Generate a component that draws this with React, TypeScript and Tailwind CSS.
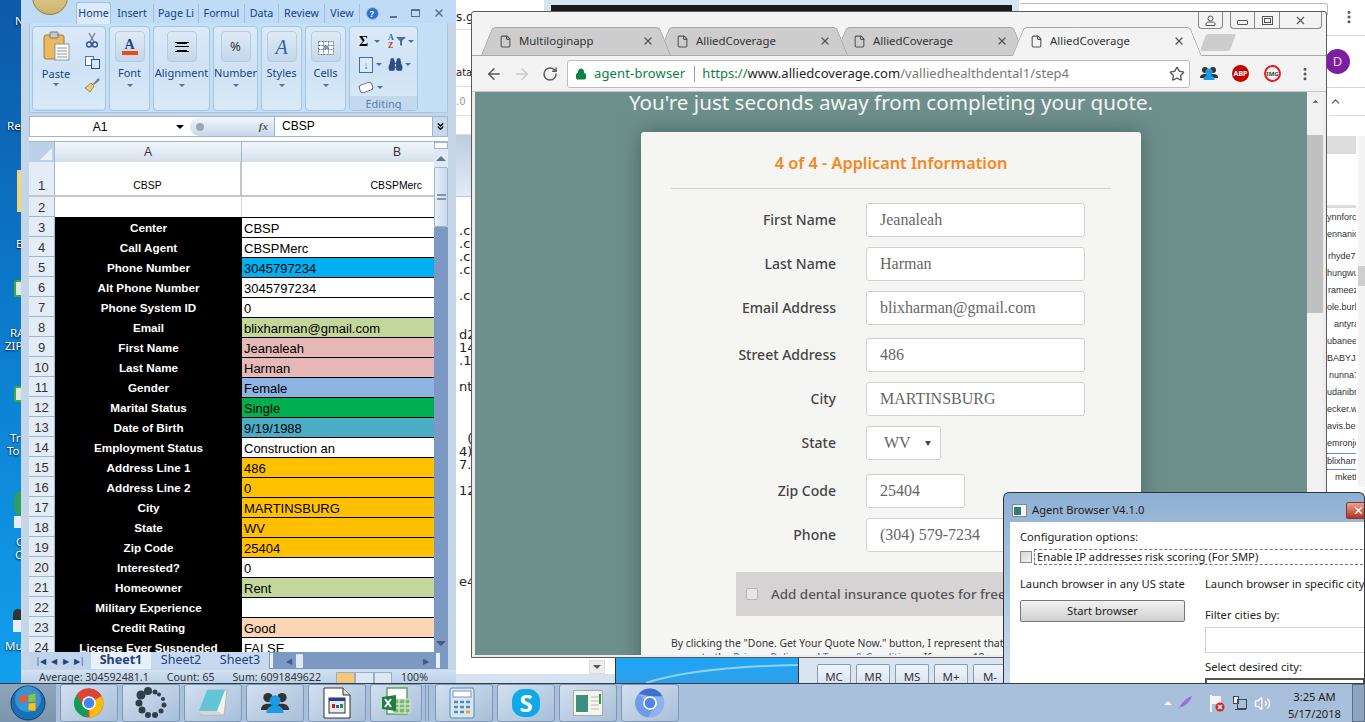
import type { ReactNode } from "react";
import { ArrowLeft, ArrowRight, Binoculars, ChevronUp, ChevronsDown, File, Lock, MoreVertical, RotateCw, Star, Volume2, X } from "lucide-react";

const rows: [string, string, string][] = [
  ["Center", "CBSP", "bg-white"],
  ["Call Agent", "CBSPMerc", "bg-white"],
  ["Phone Number", "3045797234", "bg-[#00b0f0]"],
  ["Alt Phone Number", "3045797234", "bg-white"],
  ["Phone System ID", "0", "bg-white"],
  ["Email", "blixharman@gmail.com", "bg-[#c4d79b]"],
  ["First Name", "Jeanaleah", "bg-[#e6b8b7]"],
  ["Last Name", "Harman", "bg-[#e6b8b7]"],
  ["Gender", "Female", "bg-[#8db4e2]"],
  ["Marital Status", "Single", "bg-[#00b050]"],
  ["Date of Birth", "9/19/1988", "bg-[#4bacc6]"],
  ["Employment Status", "Construction an", "bg-white"],
  ["Address Line 1", "486", "bg-[#ffc000]"],
  ["Address Line 2", "0", "bg-[#ffc000]"],
  ["City", "MARTINSBURG", "bg-[#ffc000]"],
  ["State", "WV", "bg-[#ffc000]"],
  ["Zip Code", "25404", "bg-[#ffc000]"],
  ["Interested?", "0", "bg-white"],
  ["Homeowner", "Rent", "bg-[#c4d79b]"],
  ["Military Experience", "", "bg-white"],
  ["Credit Rating", "Good", "bg-[#fcd5b4]"],
  ["License Ever Suspended", "FALSE", "bg-white"],
];

const fields = [
  { label: "First Name", value: "Jeanaleah", mt: "mt-[14px]" },
  { label: "Last Name", value: "Harman", mt: "mt-[10px]" },
  { label: "Email Address", value: "blixharman@gmail.com", mt: "mt-[10px]" },
  { label: "Street Address", value: "486", mt: "mt-[13px]" },
  { label: "City", value: "MARTINSBURG", mt: "mt-[10px]" },
];

const sideNames: [string, string][] = [
  ["ynnforc", "pl-0"],
  ["ennanic", "pl-0"],
  ["rhyde7z", "pl-[1px] mt-[5px]"],
  ["hungwu", "pl-0"],
  ["rameez", "pl-[1px]"],
  ["ole.burl", "pl-0"],
  ["antyra", "pl-[7px]"],
  ["ubanee", "pl-0"],
  ["BABYJA", "pl-0"],
  ["nunna7", "pl-[2px]"],
  ["udanibr", "pl-0"],
  ["ecker.w", "pl-0"],
  ["avis.ben", "pl-0"],
  ["emronjo", "pl-0"],
  ["blixham", "pl-0 border-y border-[#5b8fe0]"],
  ["mkett", "pl-[8px]"],
];

const behindLines = [
  [".c", "mt-[27px]"], [".c", ""], [".c", ""], [".c", ""], ["", ""], [".c", ""], ["", ""], ["", ""],
  ["d2", ""], ["14", ""], [".1", ""], ["", ""], ["nt", ""], ["", ""], ["", ""], ["", ""], ["  (", ""], ["4)", ""], ["7.", ""], ["", ""], ["12", ""],
];

const excelTabs: [string, string][] = [
  ["Insert", "w-[43px]"],
  ["Page Li", "w-[45px]"],
  ["Formul", "w-[46px]"],
  ["Data", "w-[34px]"],
  ["Review", "w-[46px]"],
  ["View", "w-[35px]"],
];

function Caret() {
  return <span className="h-0 w-0 border-x-[3px] border-t-[3px] border-x-transparent border-t-[#4d6f99]" />;
}

function Ribbon({ label, children, w, launcher }: { label: string; children?: ReactNode; w: string; launcher?: boolean }) {
  return (
    <div className={`${w} flex shrink-0 flex-col overflow-hidden rounded-[4px] border border-[#a9c4e0] bg-gradient-to-b from-[#dbeaf8] via-[#cfe3f5] to-[#d8eaf8]`}>
      <div className="flex flex-1 flex-col items-center pt-[4px]">{children}</div>
      {launcher ? <div className="h-[16px] bg-[#c2d9ee] text-center text-[11px] leading-[16px] text-[#5b7fa8]">{label}</div> : null}
    </div>
  );
}

function RibbonGroup({ label, glyph, w }: { label: string; glyph: ReactNode; w: string }) {
  return (
    <Ribbon label={label} w={w}>
      <div className="flex h-[31px] w-[30px] items-center justify-center rounded-[4px] border border-[#b5cbe2] bg-gradient-to-b from-[#dfeaf6] to-[#c3d7eb]">{glyph}</div>
      <span className="mt-[4px] whitespace-nowrap text-[11px] leading-[14px] text-[#15428b]">{label}</span>
      <span className="mt-[6px]"><Caret /></span>
    </Ribbon>
  );
}

function Sheet() {
  return (
    <div className="flex min-h-0 flex-1 overflow-hidden">
      <div className="w-[405px] shrink-0 overflow-hidden bg-white">
        <div className="flex h-[20px]">
          <div className="flex w-[26px] items-end justify-end border-r border-[#9eb6ce] bg-[#bcd0e8] p-[2px]">
            <span className="h-0 w-0 border-b-[12px] border-l-[12px] border-b-[#e8f0f8] border-l-transparent" />
          </div>
          <div className="flex w-[187px] justify-center border-r border-[#9eb6ce] bg-gradient-to-b from-[#f2f6fb] to-[#d5e0ed] text-[12px] leading-[21px] text-[#333]">A</div>
          <div className="flex w-[192px] justify-end bg-gradient-to-b from-[#f2f6fb] to-[#d5e0ed] pr-[33px] text-[12px] leading-[21px] text-[#333]">B</div>
        </div>
        <div className="flex h-[35px] border-b-2 border-[#c6c6c6]">
          <div className="flex w-[26px] items-end justify-center border-r border-[#9eb6ce] bg-[#e4ecf7] text-[13px] leading-[18px] text-[#333]">1</div>
          <div className="flex w-[187px] items-end justify-center border-r-2 border-[#c6c6c6] pb-[3px] text-[10.4px] leading-[12px] text-black">CBSP</div>
          <div className="flex w-[192px] items-end justify-end pb-[3px] pr-[12px] text-[10.4px] leading-[12px] text-black">CBSPMerc</div>
        </div>
        <div className="flex h-[20px]">
          <div className="w-[26px] border-b border-r border-[#9eb6ce] bg-[#e4ecf7] text-center text-[13px] leading-[21px] text-[#333]">2</div>
          <div className="w-[187px] border-r border-[#d4d4d4]" />
          <div className="w-[192px]" />
        </div>
        {rows.map((r, i) => (
          <div className={`flex overflow-hidden ${i === rows.length - 1 ? "h-[16px]" : "h-[20px]"}`} key={r[0]}>
            <div className="w-[26px] border-b border-r border-[#9eb6ce] bg-[#e4ecf7] text-center text-[13px] leading-[22px] text-[#333]">{i + 3}</div>
            <div className="w-[187px] whitespace-nowrap bg-black text-center text-[11.7px] font-bold leading-[22px] text-white">{r[0]}</div>
            <div className={`${r[2]} w-[192px] overflow-hidden whitespace-nowrap border-t border-black pl-[2px] text-[13px] leading-[21px] text-black`}>{r[1]}</div>
          </div>
        ))}
      </div>
      <div className="flex w-[15px] flex-col bg-[#dfe9f5]">
        <div className="h-[7px] border border-[#9eb6ce] bg-white" />
        <div className="flex h-[18px] items-center justify-center">
          <span className="h-0 w-0 border-x-[5px] border-b-[5px] border-x-transparent border-b-[#5f7690]" />
        </div>
        <div className="flex h-[60px] items-center justify-center rounded-[2px] border border-[#9eb6ce] bg-gradient-to-r from-[#e8eff7] to-[#c9d9eb]">
          <div className="h-[6px] w-[9px] border-y-2 border-[#8094ab]" />
        </div>
        <div className="flex-1 bg-[#7c99c3]" />
        <div className="flex h-[18px] items-center justify-center bg-[#7c99c3]">
          <span className="h-0 w-0 border-x-[5px] border-t-[5px] border-x-transparent border-t-[#46596f]" />
        </div>
      </div>
    </div>
  );
}

function ExcelWindow() {
  return (
    <div className="absolute left-[21px] top-0 flex h-[683px] w-[435px] flex-col overflow-hidden bg-[#c5d6e9] font-['Liberation_Sans',sans-serif]">
      <div className="relative flex h-[23px] shrink-0 items-end bg-[#bfdbf5] pl-[55px] font-['Noto_Sans',sans-serif] text-[10.7px] text-[#15428b]">
        <span className="absolute left-[11px] top-[-21px] h-[36px] w-[36px] rounded-full border border-[#8f7a45] bg-gradient-to-b from-[#e8d9a8] to-[#cdb36a]" />
        <div className="mb-[-1px] flex h-[22px] w-[35px] items-center justify-center rounded-t-[3px] border border-b-0 border-[#9fc0e0] bg-[#dcebf9]">Home</div>
        {excelTabs.map(([t, w]) => (
          <div key={t} className={`${w} flex h-[19px] items-center justify-center overflow-hidden whitespace-nowrap border-r border-[#a3c0dc]`}>{t}</div>
        ))}
        <div className="ml-[5px] flex h-[19px] w-[14px] items-center justify-center">
          <span className="flex h-[13px] w-[13px] items-center justify-center rounded-full border border-[#9fc0e8] bg-[#2f6fd0] text-[9px] font-bold leading-none text-white">?</span>
        </div>
        <span className="mb-[5px] ml-[11px] h-[2px] w-[7px] bg-[#58708c]" />
        <span className="mb-[6px] ml-[14px] h-[8px] w-[9px] border border-t-2 border-[#58708c]" />
        <X className="mb-[4px] ml-[13px] text-[#58708c]" size={12} strokeWidth={3} />
      </div>
      <div className="mx-[8px] flex h-[90px] shrink-0 gap-[3px] rounded-[2px] border-x border-b border-[#a9c4e0] bg-[#c4e0f7] px-[2px] pb-[1px] pt-[3px] font-['Noto_Sans',sans-serif]">
        <Ribbon label="Clipboard" w="w-[74px]" launcher>
          <div className="flex w-full">
            <div className="flex w-[46px] flex-col items-center">
              <svg width="28" height="30" viewBox="0 0 28 30"><rect x="2" y="4" width="20" height="24" rx="2" fill="#e9b960" stroke="#9c7b3f" /><rect x="8" y="1" width="8" height="6" rx="1" fill="#c6c9d0" stroke="#73787f" /><rect x="13" y="13" width="14" height="16" fill="#fff" stroke="#8c95a3" /><path d="M15 17h10M15 20h10M15 23h10M15 26h10" stroke="#8c95a3" /></svg>
              <span className="mt-[6px] text-[11px] leading-[14px] text-[#15428b]">Paste</span>
              <span className="mt-[4px]"><Caret /></span>
            </div>
            <div className="flex w-[26px] flex-col items-center gap-[8px] pt-[2px]">
              <svg width="12" height="15" viewBox="0 0 12 15"><path d="M3 0l5 9M9 0L4 9" stroke="#7a8594" strokeWidth="1.4" /><circle cx="3" cy="11.5" r="2.5" fill="none" stroke="#2f4f9f" strokeWidth="1.5" /><circle cx="9" cy="11.5" r="2.5" fill="none" stroke="#2f4f9f" strokeWidth="1.5" /></svg>
              <svg width="15" height="13" viewBox="0 0 15 13"><rect x=".5" y=".5" width="8" height="9" fill="#fff" stroke="#4f6fa8" /><rect x="6.5" y="3.5" width="8" height="9" fill="#dbe7f7" stroke="#1f4f9f" /></svg>
              <svg width="16" height="16" viewBox="0 0 16 16"><path d="M9 7l5-6 2 2-6 5z" fill="#6d7fa0" /><path d="M1 11l6-5 3 3-4 6z" fill="#e8cd78" stroke="#a08a42" /></svg>
            </div>
          </div>
        </Ribbon>
        <RibbonGroup label="Font" w="w-[41px]" glyph={<span className="flex flex-col items-center font-['Liberation_Serif',serif] text-[14px] font-bold leading-[13px] text-[#1f3f8f]">A<span className="h-[4px] w-[16px] bg-[#f04a10]" /></span>} />
        <RibbonGroup label="Alignment" w="w-[57px]" glyph={<span className="flex h-[10px] w-[14px] flex-col justify-between border-y border-black"><span className="mx-auto h-px w-[10px] bg-black" /><span className="h-px w-full bg-black" /><span className="mx-auto h-px w-[10px] bg-black" /></span>} />
        <RibbonGroup label="Number" w="w-[45px]" glyph={<span className="text-[13px] leading-none text-[#333]">%</span>} />
        <RibbonGroup label="Styles" w="w-[41px]" glyph={<span className="font-['Liberation_Serif',serif] text-[20px] italic leading-none text-[#2f5fb0]">A</span>} />
        <RibbonGroup label="Cells" w="w-[41px]" glyph={<svg width="16" height="16" viewBox="0 0 16 16"><path d="M.5 2.5h15v13H.5zM.5 6.5h15M.5 10.5h15M5.5 2.5v13M10.5 2.5v13" fill="#fff" stroke="#6b7a8f" strokeDasharray="2 1" /><rect x="6" y="7" width="4" height="3" fill="#6f9de0" /></svg>} />
        <Ribbon label="Editing" w="w-[69px]" launcher>
          <div className="grid w-full grid-cols-2 gap-y-[6px] pl-[9px] pt-[2px]">
            <span className="flex h-[17px] items-center gap-[6px] font-['Liberation_Serif',serif] text-[14px] font-bold"><span>Σ</span><Caret /></span>
            <span className="flex h-[17px] items-center gap-[2px]">
              <span className="flex flex-col font-['Liberation_Serif',serif] text-[8px] font-bold leading-[8px] text-[#2f5fb0]">A<span className="text-[#c03030]">Z</span></span>
              <svg width="10" height="9" viewBox="0 0 10 9"><path d="M0 0h10L6 4v5L4 8V4z" fill="#4c6f9f" /></svg>
              <Caret />
            </span>
            <span className="flex h-[17px] items-center gap-[3px]"><span className="h-[16px] w-[14px] border border-[#3f6fb0] bg-[#dcebf9] text-center text-[10px] font-bold leading-[14px] text-[#2a5fc0]">↓</span><Caret /></span>
            <span className="flex h-[17px] items-center gap-[2px]"><Binoculars size={15} fill="#2f4f80" className="text-[#2f4f80]" /><Caret /></span>
            <span className="flex h-[17px] items-center gap-[4px]"><span className="h-[9px] w-[14px] -rotate-[20deg] rounded-[3px] border border-[#667] bg-white" /><Caret /></span>
          </div>
        </Ribbon>
      </div>
      <div className="mx-[8px] mt-[3px] flex h-[21px] shrink-0 items-center border border-[#9eb6ce] bg-white text-[12px] text-black">
        <div className="relative flex h-full w-[160px] shrink-0 justify-center pr-[20px] leading-[21px]">
          A1
          <span className="absolute right-[6px] top-[8px] h-0 w-0 border-x-[4px] border-t-[4px] border-x-transparent border-t-black" />
        </div>
        <div className="flex h-full w-[84px] shrink-0 items-center justify-between rounded-l-full bg-gradient-to-b from-[#f3f7fc] to-[#c6d7ea] pl-[6px] pr-[6px] font-['Liberation_Serif',serif] text-[11px] font-bold italic text-[#555]">
          <span className="h-[8px] w-[8px] rounded-full bg-[#9aa7b5]" />
          <span>fx</span>
        </div>
        <div className="flex-1 border-l border-[#9eb6ce] pl-[7px] leading-[21px]">CBSP</div>
        <div className="flex h-full w-[15px] items-center justify-center border-l border-[#9eb6ce] bg-[#c7d9ec]"><ChevronsDown size={11} strokeWidth={3} /></div>
      </div>
      <div className="mx-[8px] h-[5px] shrink-0 border-b border-[#9eb6ce] bg-white" />
      <div className="mx-[8px] flex min-h-0 flex-1 flex-col">
        <Sheet />
        <div className="flex h-[17px] shrink-0 items-center bg-[#7c99c3] font-['Noto_Sans',sans-serif] text-[12.5px] text-[#26417e]">
          <div className="flex h-full w-[62px] items-center justify-around bg-[#bfd3ea] px-[4px] text-[8px] text-[#26417e]">
            <span>|◀</span><span>◀</span><span>▶</span><span>▶|</span>
          </div>
          <div className="flex h-full w-[60px] items-center justify-center bg-[#e8f0f9] font-bold">Sheet1</div>
          <div className="flex h-full w-[60px] items-center justify-center bg-[#c6d9f0]">Sheet2</div>
          <div className="flex h-full w-[58px] items-center justify-center bg-[#c6d9f0]">Sheet3</div>
          <div className="h-full w-[5px] border border-[#7c99c3] bg-[#e8f0f9]" />
          <span className="ml-[12px] text-[8px] text-[#3f5a85]">◀</span>
          <span className="ml-[4px] h-[14px] w-[7px] rounded-[1px] bg-[#dfe8f3]" />
          <span className="ml-auto mr-[6px] text-[8px] text-[#3f5a85]">▶</span>
          <div className="mr-[7px] h-full w-[6px] border border-[#7c99c3] bg-[#e8f0f9]" />
        </div>
      </div>
      <div className="mt-[1px] flex h-[13px] shrink-0 items-start gap-[18px] overflow-hidden bg-gradient-to-b from-[#d2e2f3] to-[#bcd0e8] pl-[18px] font-['Noto_Sans',sans-serif] text-[10.6px] leading-[15px] text-[#333]">
        <span>Average: 304592481.1</span>
        <span>Count: 65</span>
        <span>Sum: 6091849622</span>
        <span className="ml-[-3px] mt-[2px] flex">
          <span className="h-[12px] w-[19px] border border-[#98afc9] bg-[#f3c877]" />
          <span className="h-[12px] w-[19px] border border-[#98afc9] bg-[#dfe7f1]" />
          <span className="h-[12px] w-[18px] border border-[#98afc9] bg-[#dfe7f1]" />
        </span>
        <span className="ml-[-9px]">100%</span>
      </div>
    </div>
  );
}

function Tab({ title, active, z }: { title: string; active?: boolean; z: string }) {
  const fill = active ? "bg-[#f3f3f3]" : "bg-[#cdcdcd]";
  return (
    <div className={`${z} ${active ? "mb-[-1px] h-[29px] pb-[1px]" : "h-[28px]"} relative mr-[-13px] flex w-[190px] items-center pl-[18px] pr-[17px] text-[11.4px] text-[#333]`}>
      <span className={`${fill} absolute inset-y-0 left-0 w-[60%] origin-bottom -skew-x-[22deg] rounded-tl-[4px] border-l border-t border-[#a5a5a5]`} />
      <span className={`${fill} absolute inset-y-0 right-0 w-[60%] origin-bottom skew-x-[22deg] rounded-tr-[4px] border-r border-t border-[#a5a5a5]`} />
      <File size={13} className="relative shrink-0 text-[#555]" />
      <span className="relative ml-[7px] whitespace-nowrap">{title}</span>
      <X size={12} strokeWidth={2.5} className="relative ml-auto text-[#555]" />
    </div>
  );
}

function Field({ label, children, className }: { label: string; children: ReactNode; className?: string }) {
  return (
    <div className={`flex h-[34px] items-center ${className ?? ""}`}>
      <label className="mb-[2px] w-[165px] shrink-0 text-right text-[14px] font-medium text-[#444]">{label}</label>
      <div className="ml-[30px]">{children}</div>
    </div>
  );
}

function InputBox({ value, w }: { value: string; w: string }) {
  return (
    <div className={`${w} flex h-[34px] items-center rounded-[3px] border border-[#cfcfcf] bg-white pl-[13px] font-['Liberation_Serif',serif] text-[16px] text-[#666]`}>{value}</div>
  );
}

function ChromeWindow() {
  return (
    <div className="absolute left-[471px] top-[11px] flex h-[647px] w-[856px] flex-col overflow-hidden rounded-t-[3px] border border-[#5b5b5b] bg-[#f3f3f3] font-['Noto_Sans',sans-serif]">
      <div className="relative flex h-[43px] shrink-0 items-end pl-[9px]">
        <Tab title="Multiloginapp" z="z-[4]" />
        <Tab title="AlliedCoverage" z="z-[3]" />
        <Tab title="AlliedCoverage" z="z-[2]" />
        <Tab title="AlliedCoverage" active z="z-10" />
        <div className="mb-[4px] ml-[14px] h-[17px] w-[30px] -skew-x-[20deg] rounded-[2px] bg-[#cdcdcd]" />
        <div className="absolute right-[4px] top-0 z-20 flex h-[17px] text-[#555]">
          <div className="mr-[7px] flex w-[25px] items-center justify-center rounded-b-[4px] border border-t-0 border-[#888]">
            <svg width="11" height="11" viewBox="0 0 11 11" fill="none" stroke="#555"><circle cx="5.5" cy="3.5" r="2.5" /><path d="M1 10.5V9c0-1.5 2-2 4.5-2s4.5.5 4.5 2v1.5z" /></svg>
          </div>
          <div className="flex w-[25px] items-end justify-center rounded-bl-[4px] border border-t-0 border-[#888] pb-[3px]"><span className="h-[5px] w-[11px] rounded-[1px] border border-[#555]" /></div>
          <div className="flex w-[25px] items-center justify-center border-b border-r border-[#888]"><span className="h-[9px] w-[11px] border border-[#555] p-[1px]"><span className="block h-full w-full border border-[#555]" /></span></div>
          <div className="flex w-[42px] items-center justify-center rounded-br-[4px] border-b border-r border-[#888]"><X size={13} strokeWidth={2} /></div>
        </div>
      </div>
      <div className="flex h-[37px] shrink-0 items-center border-y border-[#c3c3c3] border-t-[#a9a9a9] pl-[13px]">
        <ArrowLeft size={18} strokeWidth={2} className="text-[#5a5a5a]" />
        <ArrowRight size={18} strokeWidth={2} className="ml-[10px] text-[#c9c9c9]" />
        <RotateCw size={16} strokeWidth={2.2} className="ml-[11px] text-[#5a5a5a]" />
        <div className="ml-[9px] flex h-[28px] w-[623px] shrink-0 items-center rounded-[3px] border border-[#bdbdbd] bg-white pl-[7px] text-[13px]">
          <Lock size={12} fill="#0b8043" className="shrink-0 text-[#0b8043]" />
          <span className="ml-[7px] tracking-[0.15px] text-[#0b8043]">agent-browser</span>
          <span className="ml-[9px] h-[16px] w-px bg-[#9a9a9a]" />
          <span className="ml-[7px] whitespace-nowrap tracking-[0.05px]"><span className="text-[#0b8043]">https://</span><span className="text-[#222]">www.alliedcoverage.com</span><span className="text-[#777]">/valliedhealthdental1/step4</span></span>
          <Star size={16} className="ml-auto mr-[4px] text-[#555]" strokeWidth={2} />
        </div>
        <svg className="ml-[10px]" width="18" height="13" viewBox="0 0 18 13"><circle cx="5" cy="3" r="3" fill="#333" /><circle cx="13" cy="3" r="3" fill="#333" /><path d="M0 11c0-3 2-4 5-4s5 1 5 4z" fill="#333" /><path d="M8 11c0-3 2-4 5-4s5 1 5 4z" fill="#333" /><circle cx="9" cy="5" r="3.5" fill="#1a9be8" /><path d="M3.5 13c0-3 2-5 5.5-5s5.500 2 5.500 5z" fill="#1a9be8" /></svg>
        <span className="ml-[14px] flex h-[17px] w-[17px] items-center justify-center rounded-full bg-[#c40000] text-[7px] font-bold leading-none text-white">ABP</span>
        <span className="ml-[15px] flex h-[17px] w-[17px] items-center justify-center rounded-full border-2 border-[#e02020] text-[6px] font-bold leading-none text-[#444]">IMG</span>
        <MoreVertical size={16} strokeWidth={2.5} className="ml-[16px] text-[#555]" />
      </div>
      <div className="flex min-h-0 flex-1 overflow-hidden border-x-[3px] border-b-[2px] border-[#ececec]">
        <div className="flex min-w-0 flex-1 flex-col items-center overflow-hidden bg-[#6e908c]">
          <h1 className="mt-[-5px] whitespace-nowrap text-[20.6px] leading-[30px] text-[#f5f5f3]">You're just seconds away from completing your quote.</h1>
          <div className="mt-[15px] h-[600px] w-[500px] shrink-0 rounded-t-[3px] bg-[#f5f5f3] px-[30px] shadow-[0_0_22px_rgba(40,60,60,0.5)]">
            <div className="border-b border-[#d0d0d0] pb-[14px] pt-[20px] text-center text-[16.3px] font-semibold leading-[22px] text-[#f5871f]">4 of 4 - Applicant Information</div>
            {fields.map((f) => (
              <Field key={f.label} label={f.label} className={f.mt}>
                <InputBox value={f.value} w="w-[219px]" />
              </Field>
            ))}
            <Field label="State" className="mt-[10px]">
              <div className="flex h-[34px] w-[75px] items-center rounded-[3px] border border-[#cfcfcf] bg-white pl-[17px] font-['Liberation_Serif',serif] text-[16px] text-[#666]">WV<span className="ml-auto mr-[9px] h-0 w-0 border-x-[3px] border-t-[5px] border-x-transparent border-t-[#444]" /></div>
            </Field>
            <Field label="Zip Code" className="mt-[14px]"><InputBox value="25404" w="w-[99px]" /></Field>
            <Field label="Phone" className="mt-[10px]"><InputBox value="(304) 579-7234" w="w-[219px]" /></Field>
            <div className="ml-[65px] mt-[20px] flex h-[44px] w-[380px] items-center bg-[#d5d3d3] pl-[10px]">
              <span className="h-[12px] w-[12px] rounded-[2px] border border-[#b5b5b5] bg-[#e6e6e6]" />
              <span className="ml-[13px] whitespace-nowrap text-[13.4px] font-medium text-[#555]">Add dental insurance quotes for free</span>
            </div>
            <p className="mt-[20px] w-[440px] whitespace-nowrap text-[10.4px] leading-[14px] text-[#333]">
              By clicking the "Done. Get Your Quote Now." button, I represent that I am<br />
              agree to the <span className="text-[#3d7cc9] underline">Privacy Policy</span> and <span className="text-[#3d7cc9] underline">Terms &amp; Conditions</span>. If you are 18+ years
            </p>
          </div>
        </div>
        <div className="flex w-[16px] shrink-0 flex-col items-center bg-[#f1f1f1]">
          <ChevronUp size={9} fill="#555" className="mt-[5px] text-[#555]" />
          <div className="mt-[29px] h-[178px] w-full bg-[#c0c0c0]" />
        </div>
      </div>
    </div>
  );
}

function AgentWindow() {
  return (
    <div className="absolute left-[1003px] top-[492px] flex h-[191px] w-[362px] flex-col overflow-hidden rounded-t-[6px] border border-b-0 border-[#333] bg-gradient-to-b from-[#8fb0d4] to-[#c9dcf0] pl-[6px] font-['Noto_Sans',sans-serif] text-[11.2px] text-[#222]">
      <div className="flex h-[29px] shrink-0 items-center pl-[2px] pt-[6px]">
        <svg width="15" height="13" viewBox="0 0 15 13"><rect x=".5" y=".5" width="14" height="12" fill="#f3f3f3" stroke="#888" /><rect x="2" y="3" width="7" height="8" fill="#2f7f6f" /></svg>
        <span className="ml-[5px]">Agent Browser V4.1.0</span>
        <div className="ml-auto mr-[-6px] flex h-[17px] w-[24px] items-center justify-center rounded-[2px] border border-[#7f3a2a] bg-gradient-to-b from-[#e8a090] to-[#b83020]"><X size={11} strokeWidth={3} className="text-white" /></div>
      </div>
      <div className="flex-1 bg-white pl-[10px] pt-[6px]">
        <div className="leading-[17px]">Configuration options:</div>
        <div className="mt-[4px] flex items-center">
          <span className="h-[12px] w-[12px] border border-[#8a8a8a] bg-gradient-to-br from-[#d6d6d6] to-[#f4f4f4]" />
          <span className="ml-[2px] mr-[-4px] flex-1 whitespace-nowrap border border-dashed border-[#777] pl-[2px] leading-[14px]">Enable IP addresses risk scoring (For SMP)</span>
        </div>
        <div className="mt-[10px] flex">
          <div className="w-[185px] shrink-0">
            <div className="whitespace-nowrap leading-[17px]">Launch browser in any US state</div>
            <div className="mt-[8px] flex h-[22px] w-[165px] items-center justify-center rounded-[2px] border border-[#777] bg-gradient-to-b from-[#f2f2f2] to-[#d0d0d0]">Start browser</div>
          </div>
          <div className="flex-1 whitespace-nowrap">
            <div className="leading-[17px]">Launch browser in specific city</div>
            <div className="mt-[14px] leading-[17px]">Filter cities by:</div>
            <div className="mt-[4px] h-[26px] border border-[#d0d0d0] bg-white" />
            <div className="mt-[5px] leading-[17px]">Select desired city:</div>
            <div className="mt-[3px] h-[6px] border-2 border-b-0 border-[#555] bg-white" />
          </div>
        </div>
      </div>
    </div>
  );
}

function TaskButton({ children, w = "w-[58px]" }: { children: ReactNode; w?: string }) {
  return (
    <div className={`${w} flex h-[38px] shrink-0 items-center justify-center rounded-[3px] border border-[#7f97b3] bg-gradient-to-br from-[#d3e1f0] via-[#bccfe4] to-[#a9c0da]`}>{children}</div>
  );
}

function Taskbar() {
  return (
    <div className="absolute inset-x-0 bottom-0 flex h-[39px] items-center gap-[4px] border-t border-[#2f3f50] bg-[#a8c0dc] font-['Noto_Sans',sans-serif]">
      <div className="flex h-full w-[56px] shrink-0 items-center justify-center bg-gradient-to-b from-[#8ea4ba] to-[#7c95ae]">
        <svg width="36" height="36" viewBox="0 0 36 36"><circle cx="18" cy="18" r="17" fill="#1b6fb5" stroke="#0d3f70" /><circle cx="18" cy="14" r="13" fill="#5eb2e8" opacity=".5" /><path d="M10 11l7-1v7l-7 .5z" fill="#f0562b" /><path d="M18.5 10l7-1.5v8l-7 .5z" fill="#8cc63f" /><path d="M10 19l7-.5v7l-7-1z" fill="#2a9fe0" /><path d="M18.5 18.5l7-.5v8l-7-1z" fill="#ffc20e" /></svg>
      </div>
      <TaskButton>
        <svg width="30" height="30" viewBox="0 0 48 48"><circle cx="24" cy="24" r="23" fill="#db4437" /><path d="M24 24L44 13a23 23 0 0 1-19 34z" fill="#fbbc05" /><path d="M24 24L4 11a23 23 0 0 0 17 36z" fill="#0f9d58" /><path d="M24 13h20A23 23 0 0 0 4 11l10 17z" fill="#db4437" /><circle cx="24" cy="24" r="11" fill="#fff" /><circle cx="24" cy="24" r="8.5" fill="#4285f4" /></svg>
      </TaskButton>
      <TaskButton>
        <svg width="34" height="32" viewBox="0 0 34 32" fill="#2f3e4a"><circle cx="7" cy="8" r="4.5" /><circle cx="5" cy="16" r="3.5" /><circle cx="8" cy="23" r="3.5" /><circle cx="14" cy="28" r="3" /><circle cx="21" cy="28" r="3" /><circle cx="27" cy="24" r="2.5" /><circle cx="30" cy="18" r="2.5" /><circle cx="29" cy="12" r="2" /><circle cx="14" cy="4" r="4" /><circle cx="21" cy="5" r="2.5" /><circle cx="25" cy="7.5" r="2" /></svg>
      </TaskButton>
      <TaskButton>
        <svg width="32" height="32" viewBox="0 0 32 32"><path d="M11 3h19l-3 25H4z" fill="#f2f2ea" stroke="#b5b5b5" /><path d="M10 3h18L20 24H2z" fill="#63c4d6" /><path d="M2 24h18l6 3H4z" fill="#d8d8d0" /></svg>
      </TaskButton>
      <TaskButton>
        <svg width="28" height="24" viewBox="0 0 18 13"><circle cx="4.5" cy="3" r="3" fill="#333" /><circle cx="13.5" cy="3" r="3" fill="#333" /><path d="M0 11c0-3 2-4 5-4s5 1 5 4z" fill="#333" /><path d="M8 11c0-3 2-4 5-4s5 1 5 4z" fill="#333" /><circle cx="9" cy="5" r="3.5" fill="#1a9be8" /><path d="M3.5 13c0-3 2-5 5.5-5s5.5 2 5.5 5z" fill="#1a9be8" /></svg>
      </TaskButton>
      <TaskButton>
        <svg width="28" height="32" viewBox="0 0 28 32"><path d="M1 1h19l7 7v23H1z" fill="#fff" stroke="#333" /><path d="M20 1v7h7" fill="#ddd" stroke="#333" /><rect x="6" y="11" width="16" height="15" fill="#e8e8e8" stroke="#333" /><rect x="6" y="11" width="16" height="3" fill="#1f3f9f" /><rect x="9" y="17" width="3" height="4" fill="#c02020" /><rect x="13" y="18" width="3" height="3" fill="#2060c0" /><rect x="17" y="17" width="3" height="4" fill="#209040" /></svg>
      </TaskButton>
      <TaskButton w="w-[52px]">
        <svg width="32" height="32" viewBox="0 0 32 32"><path d="M7 1h20v26H7z" fill="#fff" stroke="#5fa05f" strokeWidth="1.5" /><path d="M13 12h17v14H13z" fill="#7fb86f" stroke="#dfeeda" /><path d="M13 17h17M13 21h17M19 12v14M25 12v14" stroke="#e8f3e4" /><path d="M2 10l14-2v16l-14-2z" fill="#1f7f3f" /><path d="M5 12l6 8M11 12l-6 8" stroke="#fff" strokeWidth="2" /></svg>
      </TaskButton>
      <div className="ml-[-1px] h-[36px] w-[2px] shrink-0 border-l border-[#7f97b3]" />
      <div className="ml-[-3px] h-[36px] w-[3px] shrink-0 border-l border-[#7f97b3]" />
      <TaskButton>
        <svg width="30" height="32" viewBox="0 0 30 32"><rect x="1" y="1" width="24" height="30" rx="2" fill="#d7e7f4" stroke="#5d88b0" /><rect x="4" y="4" width="18" height="6" fill="#fff" stroke="#7b9ab8" /><path d="M5 15h4M11 15h4M17 15h4M5 20h4M11 20h4M17 20h4M5 25h4M11 25h4" stroke="#5d88b0" strokeWidth="2.5" /><path d="M17 25h4" stroke="#f2a32c" strokeWidth="3" /></svg>
      </TaskButton>
      <TaskButton>
        <span className="flex h-[28px] w-[28px] items-center justify-center rounded-[42%] bg-[#0fa9e8] text-[24px] font-bold leading-none text-white">S</span>
      </TaskButton>
      <TaskButton>
        <svg width="30" height="26" viewBox="0 0 30 26"><rect x=".5" y=".5" width="29" height="25" fill="#f5f5f0" stroke="#aaa" /><rect x="3" y="5" width="12" height="17" fill="#3f8f7f" /><path d="M18 7h8M18 11h8M18 15h8M18 19h8" stroke="#bbb" /><rect x="26" y="4" width="2" height="10" fill="#3f8f50" /></svg>
      </TaskButton>
      <TaskButton>
        <svg width="30" height="30" viewBox="0 0 48 48"><circle cx="24" cy="24" r="23" fill="#8fb3ef" /><path d="M24 13h20A23 23 0 0 0 6 9z" fill="#3f70d0" /><path d="M6 9a23 23 0 0 0 15 38l8-13z" fill="#6f9be8" /><circle cx="24" cy="24" r="11" fill="#fff" /><circle cx="24" cy="24" r="8.5" fill="#4f86ee" /></svg>
      </TaskButton>
      <div className="ml-auto flex h-full items-center text-[#222]">
        <span className="h-0 w-0 border-x-[4px] border-b-[4px] border-x-transparent border-b-[#f2f6fa]" />
        <svg className="ml-[5px]" width="16" height="16" viewBox="0 0 16 16"><path d="M1 15C4 8 9 3 15 1c-2 6-7 11-12 11z" fill="#9a6fd8" /></svg>
        <svg className="ml-[16px]" width="16" height="19" viewBox="0 0 16 19"><path d="M2 1v17" stroke="#f4f4f4" strokeWidth="2" /><path d="M3 2h9v8H3z" fill="#f4f4f4" /><circle cx="11" cy="13" r="4.5" fill="#d8232a" /><path d="M9 11l4 4M13 11l-4 4" stroke="#fff" strokeWidth="1.5" /></svg>
        <svg className="ml-[7px]" width="16" height="16" viewBox="0 0 16 16" fill="none" stroke="#3b4a55"><rect x="1.5" y="1.5" width="5" height="7" fill="#f0f0f0" /><rect x="5.5" y="4.5" width="9" height="9" /><path d="M3 14.5h11" /></svg>
        <Volume2 size={17} className="ml-[6px] text-[#f4f6f8]" />
        <div className="ml-[17px] flex flex-col items-center pt-[4px] text-[11.2px] leading-[17px] text-[#1d1d1d]">
          <span>3:25 AM</span>
          <span>5/17/2018</span>
        </div>
        <div className="ml-[11px] h-full w-[13px] border border-[#5d6f82] bg-[#8da5bf]" />
      </div>
    </div>
  );
}

function DesktopIcons() {
  return (
    <div className="absolute left-0 top-0 flex h-[683px] w-[21px] flex-col overflow-hidden font-['Noto_Sans',sans-serif] text-[11.5px] leading-[13px] text-white [text-shadow:0_1px_2px_#000]">
      <span className="mt-[14px] pl-[15px]">N</span>
      <span className="mt-[92px] pl-[7px]">Re</span>
      <span className="ml-[17px] mt-[38px] h-[42px] w-[8px] bg-[#f2d377]" />
      <span className="mt-[25px] pl-[16px]">B</span>
      <span className="ml-[14px] mt-[30px] h-[17px] w-[10px] rounded-[2px] border-2 border-[#3fa93f] bg-[#dfe8df]" />
      <span className="mt-[29px] pl-[10px]">RA</span>
      <span className="pl-[5px]">ZIP</span>
      <span className="ml-[14px] mt-[34px] h-[16px] w-[10px] rounded-[2px] border-2 border-[#3fa93f] bg-[#dfe8df]" />
      <span className="mt-[29px] pl-[10px]">Tr</span>
      <span className="pl-[7px]">To</span>
      <span className="ml-[14px] mt-[34px] h-[25px] w-[8px] rounded-l-full bg-[#2f9f5f]" />
      <span className="ml-[14px] h-[12px] w-[8px] bg-[#e8eef6]" />
      <span className="mt-[7px] pl-[16px]">C</span>
      <span className="pl-[15px]">C</span>
      <span className="ml-[13px] mt-[48px] h-[11px] w-[10px] rounded-t-full bg-[#333]" />
      <span className="ml-[13px] h-[12px] w-[10px] bg-[#e8eef6]" />
      <span className="mt-[7px] pl-[5px]">Mu</span>
    </div>
  );
}

function BehindLeft() {
  return (
    <div className="absolute left-[456px] top-0 flex h-[683px] w-[159px] flex-col overflow-hidden bg-white font-['DejaVu_Sans',sans-serif] text-[13px] leading-[13px] text-[#222]">
      <div className="h-[30px] border-b border-[#ddd] pt-[11px] text-[12px]">s.g</div>
      <div className="h-[57px] border-b border-[#ddd] pt-[36px] text-[10px]">ata</div>
      <div className="h-[29px] border-b border-[#ddd] pt-[8px] text-[10px] text-[#999]">.0</div>
      <div className="h-[19px] border-b border-[#ddd]" />
      <div className="h-[62px] border-b border-[#b5c9de] bg-gradient-to-b from-[#bcccde] to-[#e3ecf5]" />
      <div>
        {behindLines.map((l, i) => (
          <div key={i} className={`h-[13px] whitespace-pre pl-[3px] ${l[1]}`}>{l[0]}</div>
        ))}
      </div>
      <div className="mt-[78px] pl-[3px]">e4</div>
      <div className="ml-[133px] mt-auto flex h-[14px] w-[16px] items-center justify-center border border-[#ddd] bg-[#ececec]">
        <span className="h-0 w-0 border-x-[4px] border-t-[4px] border-x-transparent border-t-[#555]" />
      </div>
      <div className="h-[9px] shrink-0 bg-[#d5e3f1]" />
    </div>
  );
}

function BehindRight() {
  return (
    <div className="absolute left-[1019px] top-0 h-[683px] w-[346px] overflow-hidden bg-white font-['Liberation_Sans',sans-serif]">
      <div className="absolute left-0 top-[3px] h-[12px] w-[309px] rounded-t-[3px] border-r border-t border-[#bbb]" />
      <div className="flex h-[36px] justify-end border-b border-[#d8d8d8] pr-[8px] pt-[9px]">
        <MoreVertical size={16} strokeWidth={2.5} className="text-[#555]" />
      </div>
      <div className="flex h-[52px] items-center border-b border-[#d8d8d8] pl-[306px]">
        <span className="flex h-[25px] w-[25px] items-center justify-center rounded-full bg-[#7b1fa2] font-['Noto_Sans',sans-serif] text-[13px] text-[#e8d8f0]">D</span>
      </div>
      <div className="ml-[310px] flex h-[28px] items-center border-b border-[#d8d8d8]">
        <ChevronUp size={13} className="text-[#555]" />
      </div>
      <div className="h-[20px]" />
      <div className="ml-[308px] flex">
        <div className="w-[29px]">
          <div className="h-[18px] bg-[#dcdcdc]" />
          <div className="mt-[1px] h-[53px] border-b-[3px] border-[#dcdcdc]" />
          <div className="mt-[2px] text-[9px] text-[#333]">
            {sideNames.map(([n, c]) => (
              <div key={n} className={`h-[17px] overflow-hidden whitespace-nowrap leading-[15px] ${c}`}>{n}</div>
            ))}
          </div>
        </div>
        <div className="ml-[2px] flex-1 bg-[#f4f4f4] pt-[130px]">
          <div className="h-[20px] bg-[#cfcfcf]" />
        </div>
      </div>
    </div>
  );
}

function BehindBottom() {
  return (
    <div className="absolute left-[615px] top-[658px] flex h-[25px] w-[388px] overflow-hidden border-l border-[#333] bg-gradient-to-b from-[#1ba5f6] to-[#2f9fe8]">
      <svg className="h-[25px] w-[182px] shrink-0" viewBox="0 0 182 25" fill="none"><path d="M30 25C70 12 130 8 182 7" stroke="#8fd2f7" strokeWidth="2" /></svg>
      <div className="flex h-[25px] flex-1 items-end gap-[5px] border-l border-[#333] bg-[#d9e4f1] pl-[18px] font-['Noto_Sans',sans-serif] text-[11.5px] text-[#334]">
        {["MC", "MR", "MS", "M+", "M-"].map((m) => (
          <div key={m} className="flex h-[19px] w-[34px] justify-center rounded-t-[2px] border border-b-0 border-[#8a9ab0] bg-gradient-to-b from-[#f0f5fa] to-[#dae4f0] pt-[5px] leading-[14px]">{m}</div>
        ))}
      </div>
    </div>
  );
}

export default function App() {
  return (
    <div className="relative h-[722px] w-[1365px] overflow-hidden bg-gradient-to-b from-[#0c5aa8] via-[#0d7fd0] to-[#12a4f2]">
      <DesktopIcons />
      <BehindLeft />
      <div className="absolute left-[544px] top-0 h-[20px] w-[475px] border-x-[7px] border-t-[5px] border-[#d6e4f1] bg-[#1b1b1b]" />
      <BehindRight />
      <BehindBottom />
      <ExcelWindow />
      <ChromeWindow />
      <AgentWindow />
      <Taskbar />
    </div>
  );
}
